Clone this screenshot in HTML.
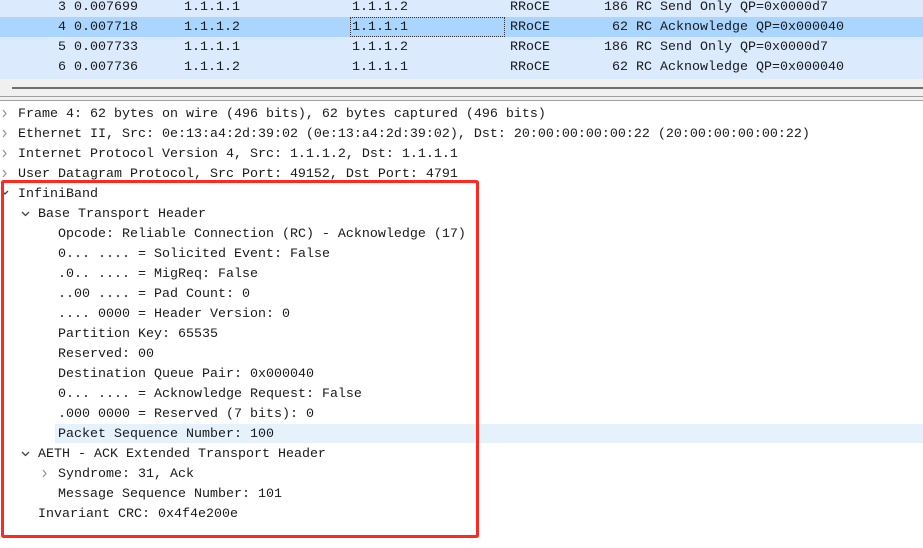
<!DOCTYPE html>
<html><head><style>
body{margin:0;width:923px;height:548px;overflow:hidden;background:#fff;font-family:"Liberation Mono","DejaVu Sans Mono",monospace;font-size:13.33px;color:#1a1a1a;position:relative}
.r{position:absolute;height:20px;line-height:20px;white-space:pre}
.pl{position:absolute;left:0;top:0;width:923px;height:79px;background:#dbeafc}
.sel{position:absolute;left:0;top:17px;width:923px;height:20px;background:#a9d5fe}
</style></head><body>
<div class="pl"></div>
<div class="sel"></div>
<div style="position:absolute;left:350px;top:17px;width:155px;height:20px;border:1px dotted #333;box-sizing:border-box"></div>
<div class="r" style="top:-2px;left:58px">3 0.007699</div><div class="r" style="top:-2px;left:184px">1.1.1.1</div><div class="r" style="top:-2px;left:352px">1.1.1.2</div><div class="r" style="top:-2px;left:510px">RRoCE</div><div class="r" style="top:-2px;left:604px">186 RC Send Only QP=0x0000d7</div>
<div class="r" style="top:18px;left:58px">4 0.007718</div><div class="r" style="top:18px;left:184px">1.1.1.2</div><div class="r" style="top:18px;left:352px">1.1.1.1</div><div class="r" style="top:18px;left:510px">RRoCE</div><div class="r" style="top:18px;left:604px"> 62 RC Acknowledge QP=0x000040</div>
<div class="r" style="top:38px;left:58px">5 0.007733</div><div class="r" style="top:38px;left:184px">1.1.1.1</div><div class="r" style="top:38px;left:352px">1.1.1.2</div><div class="r" style="top:38px;left:510px">RRoCE</div><div class="r" style="top:38px;left:604px">186 RC Send Only QP=0x0000d7</div>
<div class="r" style="top:58px;left:58px">6 0.007736</div><div class="r" style="top:58px;left:184px">1.1.1.2</div><div class="r" style="top:58px;left:352px">1.1.1.1</div><div class="r" style="top:58px;left:510px">RRoCE</div><div class="r" style="top:58px;left:604px"> 62 RC Acknowledge QP=0x000040</div>
<div style="position:absolute;left:0;top:79px;width:923px;height:21px;background:#f0f0f0"></div>
<div style="position:absolute;left:12px;top:87px;width:911px;height:2px;background:#707070"></div>
<div style="position:absolute;left:0;top:96px;width:923px;height:1px;background:#a0a0a0"></div>
<div style="position:absolute;left:0;top:100px;width:923px;height:1px;background:#a0a0a0"></div>
<div style="position:absolute;left:55px;top:424px;width:868px;height:19px;background:#e5f1fb"></div>
<div class="r" style="top:105px;left:18px">Frame 4: 62 bytes on wire (496 bits), 62 bytes captured (496 bits)</div>
<div class="r" style="top:125px;left:18px">Ethernet II, Src: 0e:13:a4:2d:39:02 (0e:13:a4:2d:39:02), Dst: 20:00:00:00:00:22 (20:00:00:00:00:22)</div>
<div class="r" style="top:145px;left:18px">Internet Protocol Version 4, Src: 1.1.1.2, Dst: 1.1.1.1</div>
<div class="r" style="top:165px;left:18px">User Datagram Protocol, Src Port: 49152, Dst Port: 4791</div>
<div class="r" style="top:185px;left:18px">InfiniBand</div>
<div class="r" style="top:205px;left:38px">Base Transport Header</div>
<div class="r" style="top:225px;left:58px">Opcode: Reliable Connection (RC) - Acknowledge (17)</div>
<div class="r" style="top:245px;left:58px">0... .... = Solicited Event: False</div>
<div class="r" style="top:265px;left:58px">.0.. .... = MigReq: False</div>
<div class="r" style="top:285px;left:58px">..00 .... = Pad Count: 0</div>
<div class="r" style="top:305px;left:58px">.... 0000 = Header Version: 0</div>
<div class="r" style="top:325px;left:58px">Partition Key: 65535</div>
<div class="r" style="top:345px;left:58px">Reserved: 00</div>
<div class="r" style="top:365px;left:58px">Destination Queue Pair: 0x000040</div>
<div class="r" style="top:385px;left:58px">0... .... = Acknowledge Request: False</div>
<div class="r" style="top:405px;left:58px">.000 0000 = Reserved (7 bits): 0</div>
<div class="r" style="top:425px;left:58px">Packet Sequence Number: 100</div>
<div class="r" style="top:445px;left:38px">AETH - ACK Extended Transport Header</div>
<div class="r" style="top:465px;left:58px">Syndrome: 31, Ack</div>
<div class="r" style="top:485px;left:58px">Message Sequence Number: 101</div>
<div class="r" style="top:505px;left:38px">Invariant CRC: 0x4f4e200e</div>
<svg style="position:absolute;left:0;top:0" width="923" height="548" fill="none" stroke-width="1.3">
<g stroke="#999"><path d="M3 110l3 3.5-3 3.5M3 130l3 3.5-3 3.5M3 150l3 3.5-3 3.5M3 170l3 3.5-3 3.5M43 470l3 3.5-3 3.5"/></g>
<g stroke="#444"><path d="M2 191l3 3 3-3M22 212l3.5 3.5 3.5-3.5M22 452l3.5 3.5 3.5-3.5"/></g>
<rect x="2.5" y="181.5" width="475" height="355" rx="1" stroke="#ff2a1f" stroke-width="3"/>
</svg>
</body></html>
